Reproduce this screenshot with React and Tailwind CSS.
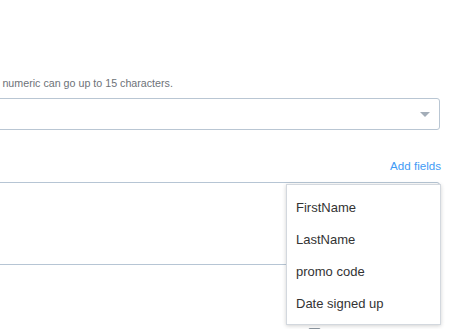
import React from "react";

const FIELDS = ["FirstName", "LastName", "promo code", "Date signed up"];

export default function App() {
  return (
    <div className="relative h-[329px] w-[451px] overflow-hidden bg-white font-['Liberation_Sans',Arial,sans-serif]">
      <div className="ml-[-300px] w-[740px] pt-[77px]">
        {/* hint */}
        <p className="ml-[281.6px] text-[10.7px] leading-[13px] text-[#6d7278]">
          <span className="text-[#7fa9dc]">and</span> numeric can go up to 15 characters.
        </p>

        {/* select */}
        <div className="mt-[8px] flex h-[32px] items-center justify-end rounded-[3px] border border-[#b9c6d3] pr-[9px]">
          <span className="h-0 w-0 border-x-[5px] border-t-[5px] border-x-transparent border-t-[#a3adb8]" />
        </div>

        {/* add fields */}
        <div className="mt-[29px] flex justify-end">
          <button type="button" className="mr-[-1px] text-[11.6px] leading-[14px] text-[#3f9bf5]">
            Add fields
          </button>
        </div>

        {/* message + dropdown */}
        <div className="relative mt-[9px]">
          <div className="h-[83px] rounded-[3px] border border-[#b6c5d4]" />

          <div className="absolute right-[-1px] top-[2px] z-10 w-[155px] border border-[#d3d8de] bg-white pb-[4px] pt-[7px] shadow-[0_1px_4px_rgba(0,0,0,0.18)]">
            {FIELDS.map((f) => (
              <div key={f} className="px-[9px] text-[13px] leading-[32px] text-[#333]">
                {f}
              </div>
            ))}
          </div>

          {/* save as template */}
          <div className="mt-[61px] flex items-center gap-[7px] pl-[608px]">
            <span className="h-[13px] w-[13px] rounded-[2px] border border-[#8a949e] bg-white" />
            <span className="text-[13px] leading-[16px] text-[#222]">Save as a template</span>
          </div>
        </div>
      </div>
    </div>
  );
}
